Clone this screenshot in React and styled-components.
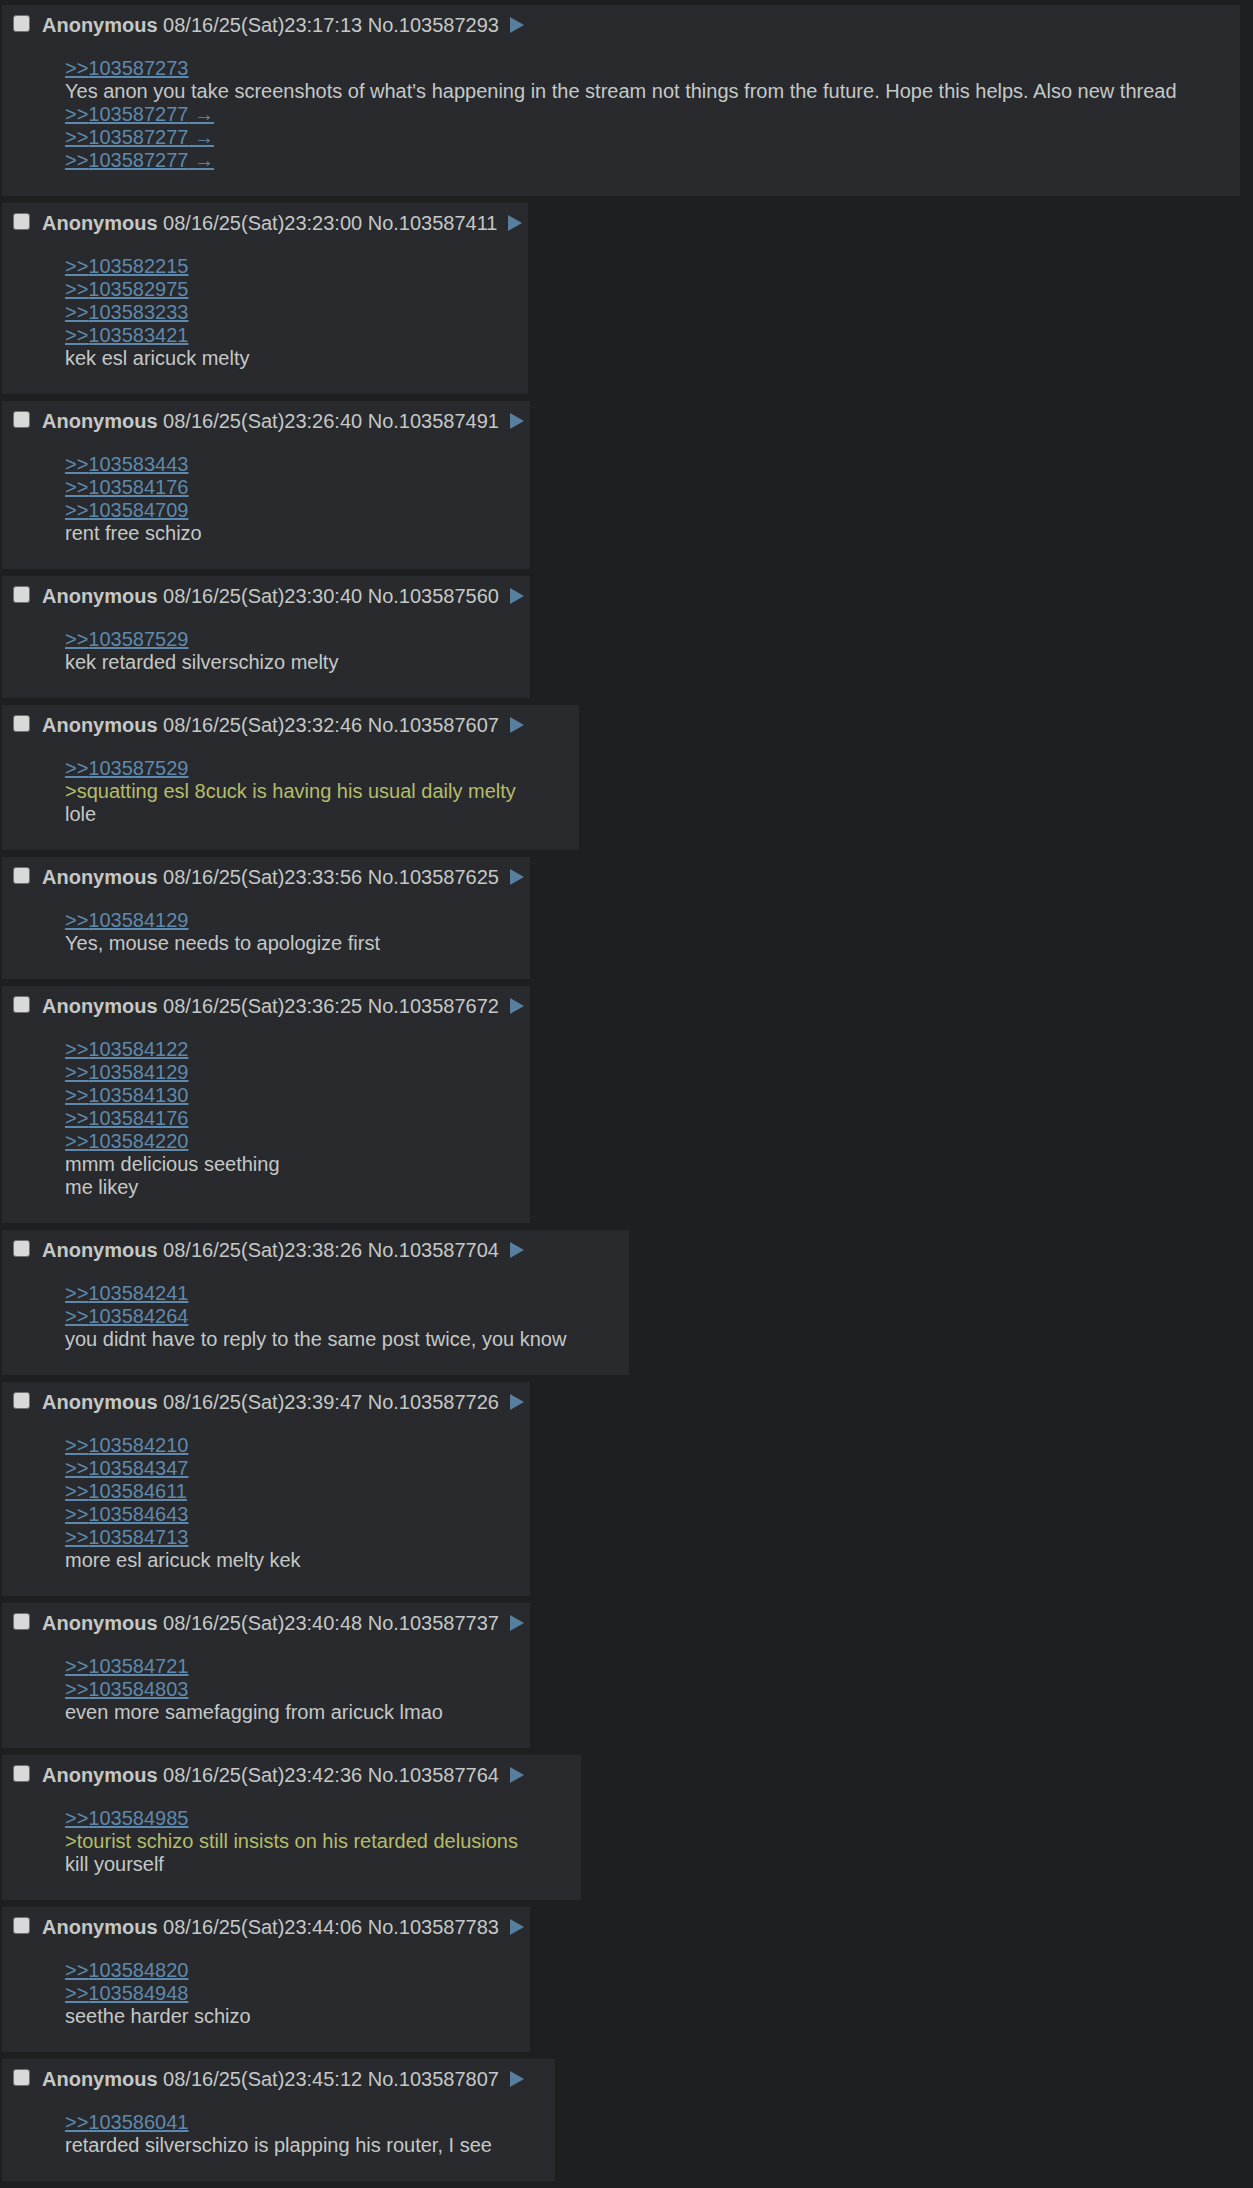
import React from 'react'
import styled, { createGlobalStyle } from 'styled-components'

const GlobalStyle = createGlobalStyle`
  html, body {
    margin: 0;
    padding: 0;
    background: #1d1f21;
  }
  body {
    font-family: "Liberation Sans", Arial, sans-serif;
    font-size: 20px;
    color: #c5c8c6;
  }
`

const posts = [
  {
    time: '23:17:13', no: '103587293',
    lines: [
      { q: '103587273' },
      { t: "Yes anon you take screenshots of what's happening in the stream not things from the future. Hope this helps. Also new thread" },
      { q: '103587277', cross: true },
      { q: '103587277', cross: true },
      { q: '103587277', cross: true },
    ],
  },
  {
    time: '23:23:00', no: '103587411',
    lines: [
      { q: '103582215' }, { q: '103582975' }, { q: '103583233' }, { q: '103583421' },
      { t: 'kek esl aricuck melty' },
    ],
  },
  {
    time: '23:26:40', no: '103587491',
    lines: [{ q: '103583443' }, { q: '103584176' }, { q: '103584709' }, { t: 'rent free schizo' }],
  },
  {
    time: '23:30:40', no: '103587560',
    lines: [{ q: '103587529' }, { t: 'kek retarded silverschizo melty' }],
  },
  {
    time: '23:32:46', no: '103587607',
    lines: [
      { q: '103587529' },
      { g: '>squatting esl 8cuck is having his usual daily melty' },
      { t: 'lole' },
    ],
  },
  {
    time: '23:33:56', no: '103587625',
    lines: [{ q: '103584129' }, { t: 'Yes, mouse needs to apologize first' }],
  },
  {
    time: '23:36:25', no: '103587672',
    lines: [
      { q: '103584122' }, { q: '103584129' }, { q: '103584130' }, { q: '103584176' }, { q: '103584220' },
      { t: 'mmm delicious seething' },
      { t: 'me likey' },
    ],
  },
  {
    time: '23:38:26', no: '103587704',
    lines: [{ q: '103584241' }, { q: '103584264' }, { t: 'you didnt have to reply to the same post twice, you know' }],
  },
  {
    time: '23:39:47', no: '103587726',
    lines: [
      { q: '103584210' }, { q: '103584347' }, { q: '103584611' }, { q: '103584643' }, { q: '103584713' },
      { t: 'more esl aricuck melty kek' },
    ],
  },
  {
    time: '23:40:48', no: '103587737',
    lines: [{ q: '103584721' }, { q: '103584803' }, { t: 'even more samefagging from aricuck lmao' }],
  },
  {
    time: '23:42:36', no: '103587764',
    lines: [
      { q: '103584985' },
      { g: '>tourist schizo still insists on his retarded delusions' },
      { t: 'kill yourself' },
    ],
  },
  {
    time: '23:44:06', no: '103587783',
    lines: [{ q: '103584820' }, { q: '103584948' }, { t: 'seethe harder schizo' }],
  },
  {
    time: '23:45:12', no: '103587807',
    lines: [{ q: '103586041' }, { t: 'retarded silverschizo is plapping his router, I see' }],
  },
]

function Post({ time, no, lines }) {
  return (
    <Reply>
      <PostInfo>
        <Check type="checkbox" />
        <Name>Anonymous</Name> 08/16/25(Sat){time} No.{no}
        <MenuBtn>
          <svg width="14" height="16" viewBox="0 0 14 16">
            <path d="M0 0 L14 8 L0 16 Z" fill="#5f89ac" />
          </svg>
        </MenuBtn>
      </PostInfo>
      <Message>
        {lines.map((l, i) => (
          <Line key={i} $green={!!l.g}>
            {l.q ? (
              <QuoteLink href="#">&gt;&gt;{l.q}{l.cross ? ' \u2192' : ''}</QuoteLink>
            ) : (
              l.t || l.g
            )}
          </Line>
        ))}
      </Message>
    </Reply>
  )
}

export default function App() {
  return (
    <>
      <GlobalStyle />
      <Thread>
        {posts.map(p => <Post key={p.no} {...p} />)}
      </Thread>
    </>
  )
}

const Thread = styled.div`
  display: flex;
  flex-direction: column;
  align-items: flex-start;
  gap: 7px;
  padding: 5px 0 0 2px;
`

const Reply = styled.div`
  background: #282a2e;
  padding: 9px 6px 0 10px;
`

const PostInfo = styled.div`
  line-height: 23px;
  height: 23px;
  display: flex;
  align-items: flex-start;
  white-space: pre;
`

const Check = styled.input`
  appearance: none;
  -webkit-appearance: none;
  margin: 1px 12px 0 1px;
  width: 17px;
  height: 17px;
  box-sizing: border-box;
  background: #d9d9d9;
  border: 1px solid #707070;
  border-radius: 3px;
`

const Name = styled.span`
  font-weight: bold;
  color: #c5c8c6;
`

const MenuBtn = styled.span`
  display: inline-block;
  margin: 3px 0 0 11px;
  height: 16px;
  opacity: 0.9;
  svg { display: block; }
`

const Message = styled.div`
  margin: 20px 57px 24px 53px;
`

const Line = styled.div`
  line-height: 23px;
  min-height: 23px;
  white-space: nowrap;
  color: ${p => (p.$green ? '#b5bd68' : '#c5c8c6')};
`

const QuoteLink = styled.a`
  color: #5f89ac;
  text-decoration: underline;
`
